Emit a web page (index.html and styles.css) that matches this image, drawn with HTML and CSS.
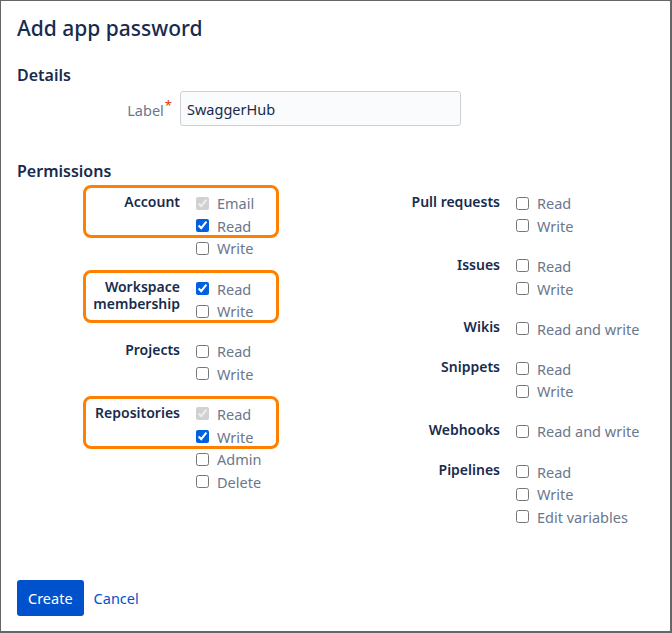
FILE: index.html
```html
<!DOCTYPE html>
<html lang="en">
<head>
    <meta charset="utf-8">
    <title>Add app password</title>
    <link rel="stylesheet" href="styles.css">
</head>
<body>
<div class="dialog">
    <h1 class="dialog_title">Add app password</h1>

    <h2 class="section_title">Details</h2>
    <div class="field_row">
        <label class="field_label" for="label">Label<span class="required">*</span></label>
        <input class="text_input" id="label" type="text" value="SwaggerHub">
    </div>

    <h2 class="section_title perms_title">Permissions</h2>
    <div class="perms">
        <div class="perms_col">
            <div class="perm_group marked">
                <div class="perm_name">Account</div>
                <div class="perm_opts">
                    <label class="opt"><input type="checkbox" checked disabled> Email</label>
                    <label class="opt"><input type="checkbox" checked> Read</label>
                    <label class="opt"><input type="checkbox"> Write</label>
                </div>
            </div>
            <div class="perm_group marked">
                <div class="perm_name">Workspace membership</div>
                <div class="perm_opts">
                    <label class="opt"><input type="checkbox" checked> Read</label>
                    <label class="opt"><input type="checkbox"> Write</label>
                </div>
            </div>
            <div class="perm_group">
                <div class="perm_name">Projects</div>
                <div class="perm_opts">
                    <label class="opt"><input type="checkbox"> Read</label>
                    <label class="opt"><input type="checkbox"> Write</label>
                </div>
            </div>
            <div class="perm_group marked">
                <div class="perm_name">Repositories</div>
                <div class="perm_opts">
                    <label class="opt"><input type="checkbox" checked disabled> Read</label>
                    <label class="opt"><input type="checkbox" checked> Write</label>
                    <label class="opt"><input type="checkbox"> Admin</label>
                    <label class="opt"><input type="checkbox"> Delete</label>
                </div>
            </div>
        </div>

        <div class="perms_col">
            <div class="perm_group">
                <div class="perm_name">Pull requests</div>
                <div class="perm_opts">
                    <label class="opt"><input type="checkbox"> Read</label>
                    <label class="opt"><input type="checkbox"> Write</label>
                </div>
            </div>
            <div class="perm_group">
                <div class="perm_name">Issues</div>
                <div class="perm_opts">
                    <label class="opt"><input type="checkbox"> Read</label>
                    <label class="opt"><input type="checkbox"> Write</label>
                </div>
            </div>
            <div class="perm_group">
                <div class="perm_name">Wikis</div>
                <div class="perm_opts">
                    <label class="opt"><input type="checkbox"> Read and write</label>
                </div>
            </div>
            <div class="perm_group">
                <div class="perm_name">Snippets</div>
                <div class="perm_opts">
                    <label class="opt"><input type="checkbox"> Read</label>
                    <label class="opt"><input type="checkbox"> Write</label>
                </div>
            </div>
            <div class="perm_group">
                <div class="perm_name">Webhooks</div>
                <div class="perm_opts">
                    <label class="opt"><input type="checkbox"> Read and write</label>
                </div>
            </div>
            <div class="perm_group">
                <div class="perm_name">Pipelines</div>
                <div class="perm_opts">
                    <label class="opt"><input type="checkbox"> Read</label>
                    <label class="opt"><input type="checkbox"> Write</label>
                    <label class="opt"><input type="checkbox"> Edit variables</label>
                </div>
            </div>
        </div>
    </div>

    <div class="buttons">
        <button class="btn_primary" type="button">Create</button>
        <a class="btn_link" href="#">Cancel</a>
    </div>
</div>
</body>
</html>
```

FILE: styles.css
```css
body {
    margin: 0;
    font-family: "Noto Sans", "Open Sans", Arial, sans-serif;
    color: #172b4d;
    background-color: #fff;
}

.dialog {
    width: 672px;
    height: 633px;
    box-sizing: border-box;
    border: solid #666;
    border-width: 1px 2px 2px 1px;
    padding: 0 16px;
    display: flex;
    flex-direction: column;
}

.dialog_title {
    font-size: 21px;
    font-weight: 500;
    margin: 11px 0 0;
    line-height: 32px;
}

.section_title {
    font-size: 16px;
    font-weight: 600;
    margin: 20px 0 0;
    line-height: 22px;
}

.perms_title {
    margin-top: 34px;
}

.field_row {
    display: grid;
    grid-template-columns: 155px 281px;
    gap: 8px;
    align-items: center;
    margin-top: 5px;
}

.field_label {
    text-align: right;
    font-size: 14.5px;
    color: #6b778c;
    position: relative;
    top: 1px;
}

.required {
    color: #de350b;
    font-size: 13px;
    position: relative;
    top: -6px;
    margin-left: 1px;
}

.text_input {
    height: 35px;
    box-sizing: border-box;
    border: 1px solid #cdd1d7;
    border-radius: 3px;
    background-color: #fafbfc;
    padding: 0 6px;
    font-family: inherit;
    font-size: 14.5px;
    color: #172b4d;
}

.perms {
    display: grid;
    grid-template-columns: 320px 1fr;
    margin-top: 10px;
}

.perm_group {
    display: grid;
    grid-template-columns: 163px 1fr;
    gap: 16px;
    margin-bottom: 17.5px;
    position: relative;
}

.perm_name {
    text-align: right;
    font-size: 14px;
    font-weight: 600;
    line-height: 17px;
    padding-top: 1px;
}

.perm_opts {
    display: flex;
    flex-direction: column;
}

.opt {
    display: flex;
    align-items: center;
    height: 22.6px;
    font-size: 14.5px;
    color: #6b778c;
}

.opt input {
    width: 13px;
    height: 13px;
    margin: 0 8px 0 0;
    accent-color: #0060df;
}

/* orange highlight frames drawn over the screenshot */
.marked::after {
    content: "";
    position: absolute;
    left: 66px;
    top: -7px;
    width: 196px;
    height: 53px;
    box-sizing: border-box;
    border: 3px solid #ff8000;
    border-radius: 8px;
}

.buttons {
    margin-top: auto;
    margin-bottom: 15px;
    display: flex;
    align-items: center;
    gap: 10px;
}

.btn_primary {
    height: 36px;
    padding: 0 11px;
    border: 0;
    border-radius: 3px;
    background-color: #0052cc;
    color: #fff;
    font-family: inherit;
    font-size: 14.5px;
}

.btn_link {
    color: #0052cc;
    font-size: 14.5px;
    text-decoration: none;
}
```
